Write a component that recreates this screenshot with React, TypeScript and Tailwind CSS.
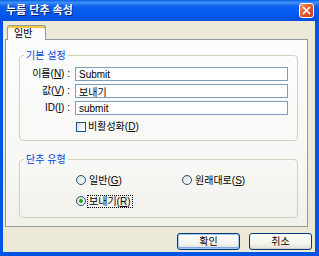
import React, { useState } from "react";

const font = "font-['Liberation_Sans','Noto_Sans_CJK_KR',sans-serif]";

const XpButton: React.FC<{ label: string; primary?: boolean }> = ({ label, primary }) => (
  <button
    className={`w-[63px] h-[17px] rounded-[3px] border border-[#003C74] bg-[linear-gradient(to_bottom,#FFFFFF_0%,#F5F4EF_60%,#E3E1D6_100%)] text-[10px] leading-none text-black ${
      primary ? "shadow-[inset_0_0_0_1px_#A9C6F5,inset_0_-1px_0_1px_#7FA7EC]" : "shadow-[inset_0_-1px_0_#D6D0C5]"
    }`}
  >
    {label}
  </button>
);

const Radio: React.FC<{ checked?: boolean; label: React.ReactNode; focused?: boolean }> = ({
  checked,
  label,
  focused,
}) => (
  <div className="flex items-center h-[12px]">
    <span className="w-[10px] h-[10px] rounded-full border border-[#1C5180] bg-[linear-gradient(135deg,#DCDCD7,#FFFFFF)] flex items-center justify-center">
      {checked && <span className="w-[4px] h-[4px] rounded-full bg-[#21A121]" />}
    </span>
    <span
      className={`ml-[1px] px-[1px] text-[10px] leading-[11px] ${
        focused ? "border border-dotted border-black" : "border border-transparent"
      }`}
    >
      {label}
    </span>
  </div>
);

export default function App() {
  const [name, setName] = useState("Submit");
  const [value, setValue] = useState("보내기");
  const [id, setId] = useState("submit");

  const fields = [
    { label: <>이름(<u>N</u>) :</>, val: name, set: setName },
    { label: <>값(<u>V</u>) :</>, val: value, set: setValue },
    { label: <>ID(<u>I</u>) :</>, val: id, set: setId },
  ];

  return (
    <div className={`w-[319px] h-[256px] flex flex-col bg-[#0054E3] ${font}`}>
      {/* title bar */}
      <div className="h-[21px] flex items-center justify-between pl-[6px] pr-[5px] bg-[linear-gradient(to_bottom,#0A60E8_0%,#3F90F7_12%,#0D62EE_30%,#0058EE_70%,#0050DD_100%)]">
        <span className="text-white text-[11px] font-bold leading-none [text-shadow:1px_1px_0_#0A1E6E]">
          누름 단추 속성
        </span>
        <span className="w-[15px] h-[15px] rounded-[3px] border border-white bg-[linear-gradient(135deg,#F0A080_0%,#E15A2A_45%,#C2401A_100%)] flex items-center justify-center">
          <svg width="9" height="9" viewBox="0 0 9 9">
            <path d="M1.5 1.5 L7.5 7.5 M7.5 1.5 L1.5 7.5" stroke="white" strokeWidth="1.6" strokeLinecap="square" />
          </svg>
        </span>
      </div>

      {/* body */}
      <div className="flex-1 ml-[3px] mr-[4px] mb-[4px] bg-[#ECE9D8] flex flex-col px-[2px] pt-[4px]">
        <div className="h-[14px] flex pl-[2px]">
          <div className="relative z-10 w-[39px] h-[15px] bg-[#FCFCFE] border border-b-0 border-[#919B9C] rounded-t-[3px] shadow-[inset_0_2px_0_#FFC83C] text-[10px] leading-[15px] pl-[6px]">
            일반
          </div>
        </div>

        <div className="w-[303px] h-[188px] border border-[#919B9C] bg-[linear-gradient(to_bottom,#FCFCFE_0%,#F7F7F4_70%,#F1F0EA_100%)] pl-[13px]">
          <fieldset className="mt-[9px] w-[279px] border border-[#D0D0BF] rounded-[4px] pb-[7px]">
            <legend className="ml-[4px] px-[2px] text-[10px] leading-[13px] text-[#0046D5]">기본 설정</legend>
            <div className="pt-[5px] grid grid-cols-[50px_213px] gap-x-[5px] gap-y-[3px]">
              {fields.map((f, i) => (
                <React.Fragment key={i}>
                  <span className="text-right text-[10px] leading-[14px] text-black">{f.label}</span>
                  <input
                    value={f.val}
                    onChange={(e) => f.set(e.target.value)}
                    className="h-[14px] border border-[#7F9DB9] bg-white px-[3px] text-[10px] leading-[12px] outline-none"
                  />
                </React.Fragment>
              ))}
            </div>
            <div className="mt-[6px] ml-[56px] flex items-center h-[12px]">
              <span className="w-[10px] h-[10px] border border-[#1C5180] bg-[linear-gradient(135deg,#DCDCD7,#FFFFFF)]" />
              <span className="ml-[2px] text-[10px] leading-none">
                비활성화(<u>D</u>)
              </span>
            </div>
          </fieldset>

          <fieldset className="mt-[12px] w-[279px] h-[65px] border border-[#D0D0BF] rounded-[4px]">
            <legend className="ml-[4px] px-[2px] text-[10px] leading-[13px] text-[#0046D5]">단추 유형</legend>
            <div className="pt-[8px] pl-[56px] grid grid-cols-[106px_auto] gap-y-[9px]">
              <Radio label={<>일반(<u>G</u>)</>} />
              <Radio label={<>원래대로(<u>S</u>)</>} />
              <Radio checked focused label={<>보내기(<u>R</u>)</>} />
            </div>
          </fieldset>
        </div>

        <div className="mt-[6px] flex justify-end gap-[9px] pr-[1px]">
          <XpButton label="확인" primary />
          <XpButton label="취소" />
        </div>
      </div>
    </div>
  );
}
